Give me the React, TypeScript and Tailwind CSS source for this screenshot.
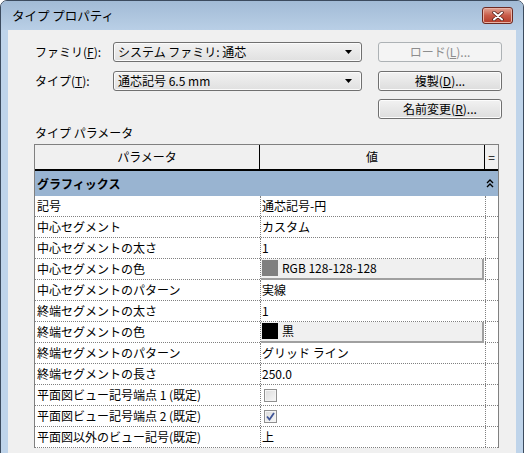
import React from "react";

type Row = {
    label: string
    value?: string
    swatch?: string
    check?: boolean
}

const rows: Row[] = [
    { label: "記号", value: "通芯記号-円" },
    { label: "中心セグメント", value: "カスタム" },
    { label: "中心セグメントの太さ", value: "1" },
    { label: "中心セグメントの色", value: "RGB 128-128-128", swatch: "#808080" },
    { label: "中心セグメントのパターン", value: "実線" },
    { label: "終端セグメントの太さ", value: "1" },
    { label: "終端セグメントの色", value: "黒", swatch: "#000000" },
    { label: "終端セグメントのパターン", value: "グリッド ライン" },
    { label: "終端セグメントの長さ", value: "250.0" },
    { label: "平面図ビュー記号端点 1 (既定)", check: false },
    { label: "平面図ビュー記号端点 2 (既定)", check: true },
    { label: "平面図以外のビュー記号(既定)", value: "上" },
]

function Arrow() {
    return (
        <svg width="7" height="4" viewBox="0 0 7 4" className="shrink-0">
            <path d="M0 0h7L3.5 4z" fill="#000" />
        </svg>
    )
}

function Combo({ text }: { text: string }) {
    return (
        <div className="w-[249px] h-[20px] flex items-center justify-between pl-[4px] pr-[9px] rounded-[3px] border border-[#707070] bg-gradient-to-b from-[#f2f2f2] to-[#e0e0e0] shadow-[inset_0_0_0_1px_#fbfbfb]">
            <span>{text}</span>
            <Arrow />
        </div>
    )
}

function Btn({ children, disabled }: { children: React.ReactNode, disabled?: boolean }) {
    return (
        <div className={`w-[124px] h-[20px] flex items-center justify-center rounded-[3px] border ${disabled ? "border-[#adb2b5] bg-[#f4f4f4] text-[#8d8d8d]" : "border-[#707070] bg-gradient-to-b from-[#f2f2f2] to-[#dddddd] shadow-[inset_0_0_0_1px_#fcfcfc] text-black"}`}>
            {children}
        </div>
    )
}

function Check({ on }: { on: boolean }) {
    return (
        <div className="w-[13px] h-[13px] border border-[#8f8f8f] bg-gradient-to-br from-[#dcdcdc] to-[#f7f7f7] shadow-[inset_0_0_0_1px_#f4f4f4] flex items-center justify-center">
            {on && (
                <svg width="9" height="9" viewBox="0 0 9 9">
                    <path d="M1 4.5l2.5 3L8 1" stroke="#3f5597" strokeWidth="1.8" fill="none" />
                </svg>
            )}
        </div>
    )
}

export default function App() {
    return (
        <div className="w-[524px] h-[453px] overflow-hidden bg-white" style={{ fontFamily: '"Noto Sans CJK JP", "Noto Sans", sans-serif' }}>
            <div className="w-[524px] h-[470px] flex flex-col border border-[#3c4b5e] rounded-t-[7px] overflow-hidden bg-[#bfd4ea] text-[12px] text-black">
                {/* Title bar */}
                <div className="h-[29px] shrink-0 flex items-center justify-between pl-[11px] pr-[10px] bg-gradient-to-b from-[#a2bbd6] to-[#b9cfe6]">
                    <span className="text-[12.5px] text-black pt-[1px]">タイプ プロパティ</span>
                    <div className="w-[31px] h-[17px] rounded-[3px] border border-[#6d2a22] bg-gradient-to-b from-[#e0a495] via-[#c85b48] to-[#b23a28] flex items-center justify-center shadow-[inset_0_0_0_1px_#e9b3a6]">
                        <svg width="12" height="10" viewBox="0 0 12 10">
                            <path d="M2 1.5l8 7M10 1.5l-8 7" stroke="#4a1a14" strokeWidth="3.4" strokeLinecap="round" />
                            <path d="M2 1.5l8 7M10 1.5l-8 7" stroke="#fff" strokeWidth="2" strokeLinecap="round" />
                        </svg>
                    </div>
                </div>

                {/* Client */}
                <div className="flex-1 mx-[7px] bg-[#f0f0f0] pt-[12px]">
                    <div className="flex items-center h-[20px]">
                        <span className="w-[105px] pl-[27px]">ファミリ(<u>F</u>):</span>
                        <Combo text="システム ファミリ: 通芯" />
                        <div className="ml-[16px]"><Btn disabled>ロード(<u>L</u>)...</Btn></div>
                    </div>
                    <div className="flex items-center h-[20px] mt-[9px]">
                        <span className="w-[105px] pl-[27px]">タイプ(<u>T</u>):</span>
                        <Combo text="通芯記号 6.5 mm" />
                        <div className="ml-[16px]"><Btn>複製(<u>D</u>)...</Btn></div>
                    </div>
                    <div className="flex h-[20px] mt-[8px] pl-[370px]">
                        <Btn>名前変更(<u>R</u>)...</Btn>
                    </div>
                    <div className="pl-[27px] mt-[2px] h-[23px] flex items-center">タイプ パラメータ</div>

                    {/* Table */}
                    <div className="ml-[26px] w-[465px] border-l border-t border-r border-[#808080] bg-white">
                        <div className="flex h-[26px] bg-[#f0f0f0] border-b-2 border-black">
                            <div className="w-[225px] flex items-center justify-center border-r border-black">パラメータ</div>
                            <div className="w-[225px] flex items-center justify-center border-r border-black">値</div>
                            <div className="flex-1 flex items-center justify-center">=</div>
                        </div>
                        <div className="flex h-[25px] bg-[#99b4d1] items-center">
                            <span className="w-[450px] pl-[2px] font-bold">グラフィックス</span>
                            <svg width="8" height="9" viewBox="0 0 8 9" className="ml-[1px]">
                                <path d="M1 4l3-3 3 3M1 8l3-3 3 3" stroke="#000" strokeWidth="1.4" fill="none" />
                            </svg>
                        </div>
                        {rows.map(r => (
                            <div key={r.label} className="flex h-[21px] border-b border-dotted border-[#808080]">
                                <div className="w-[226px] pl-[2px] flex items-center border-r border-dotted border-[#808080] whitespace-nowrap">{r.label}</div>
                                <div className="w-[225px] flex items-center border-r border-dotted border-[#808080]">
                                    {r.swatch ? (
                                        <div className="w-[223px] h-[21px] flex items-center gap-[4px] pl-[1px] bg-[#f0f0f0] border-r-2 border-b-2 border-[#a0a0a0]">
                                            <div className="w-[16px] h-[16px]" style={{ backgroundColor: r.swatch }} />
                                            <span>{r.value}</span>
                                        </div>
                                    ) : r.check !== undefined ? (
                                        <div className="pl-[3px]"><Check on={r.check} /></div>
                                    ) : (
                                        <span className="pl-[1px]">{r.value}</span>
                                    )}
                                </div>
                                <div className="flex-1" />
                            </div>
                        ))}
                    </div>
                </div>
            </div>
        </div>
    )
}
